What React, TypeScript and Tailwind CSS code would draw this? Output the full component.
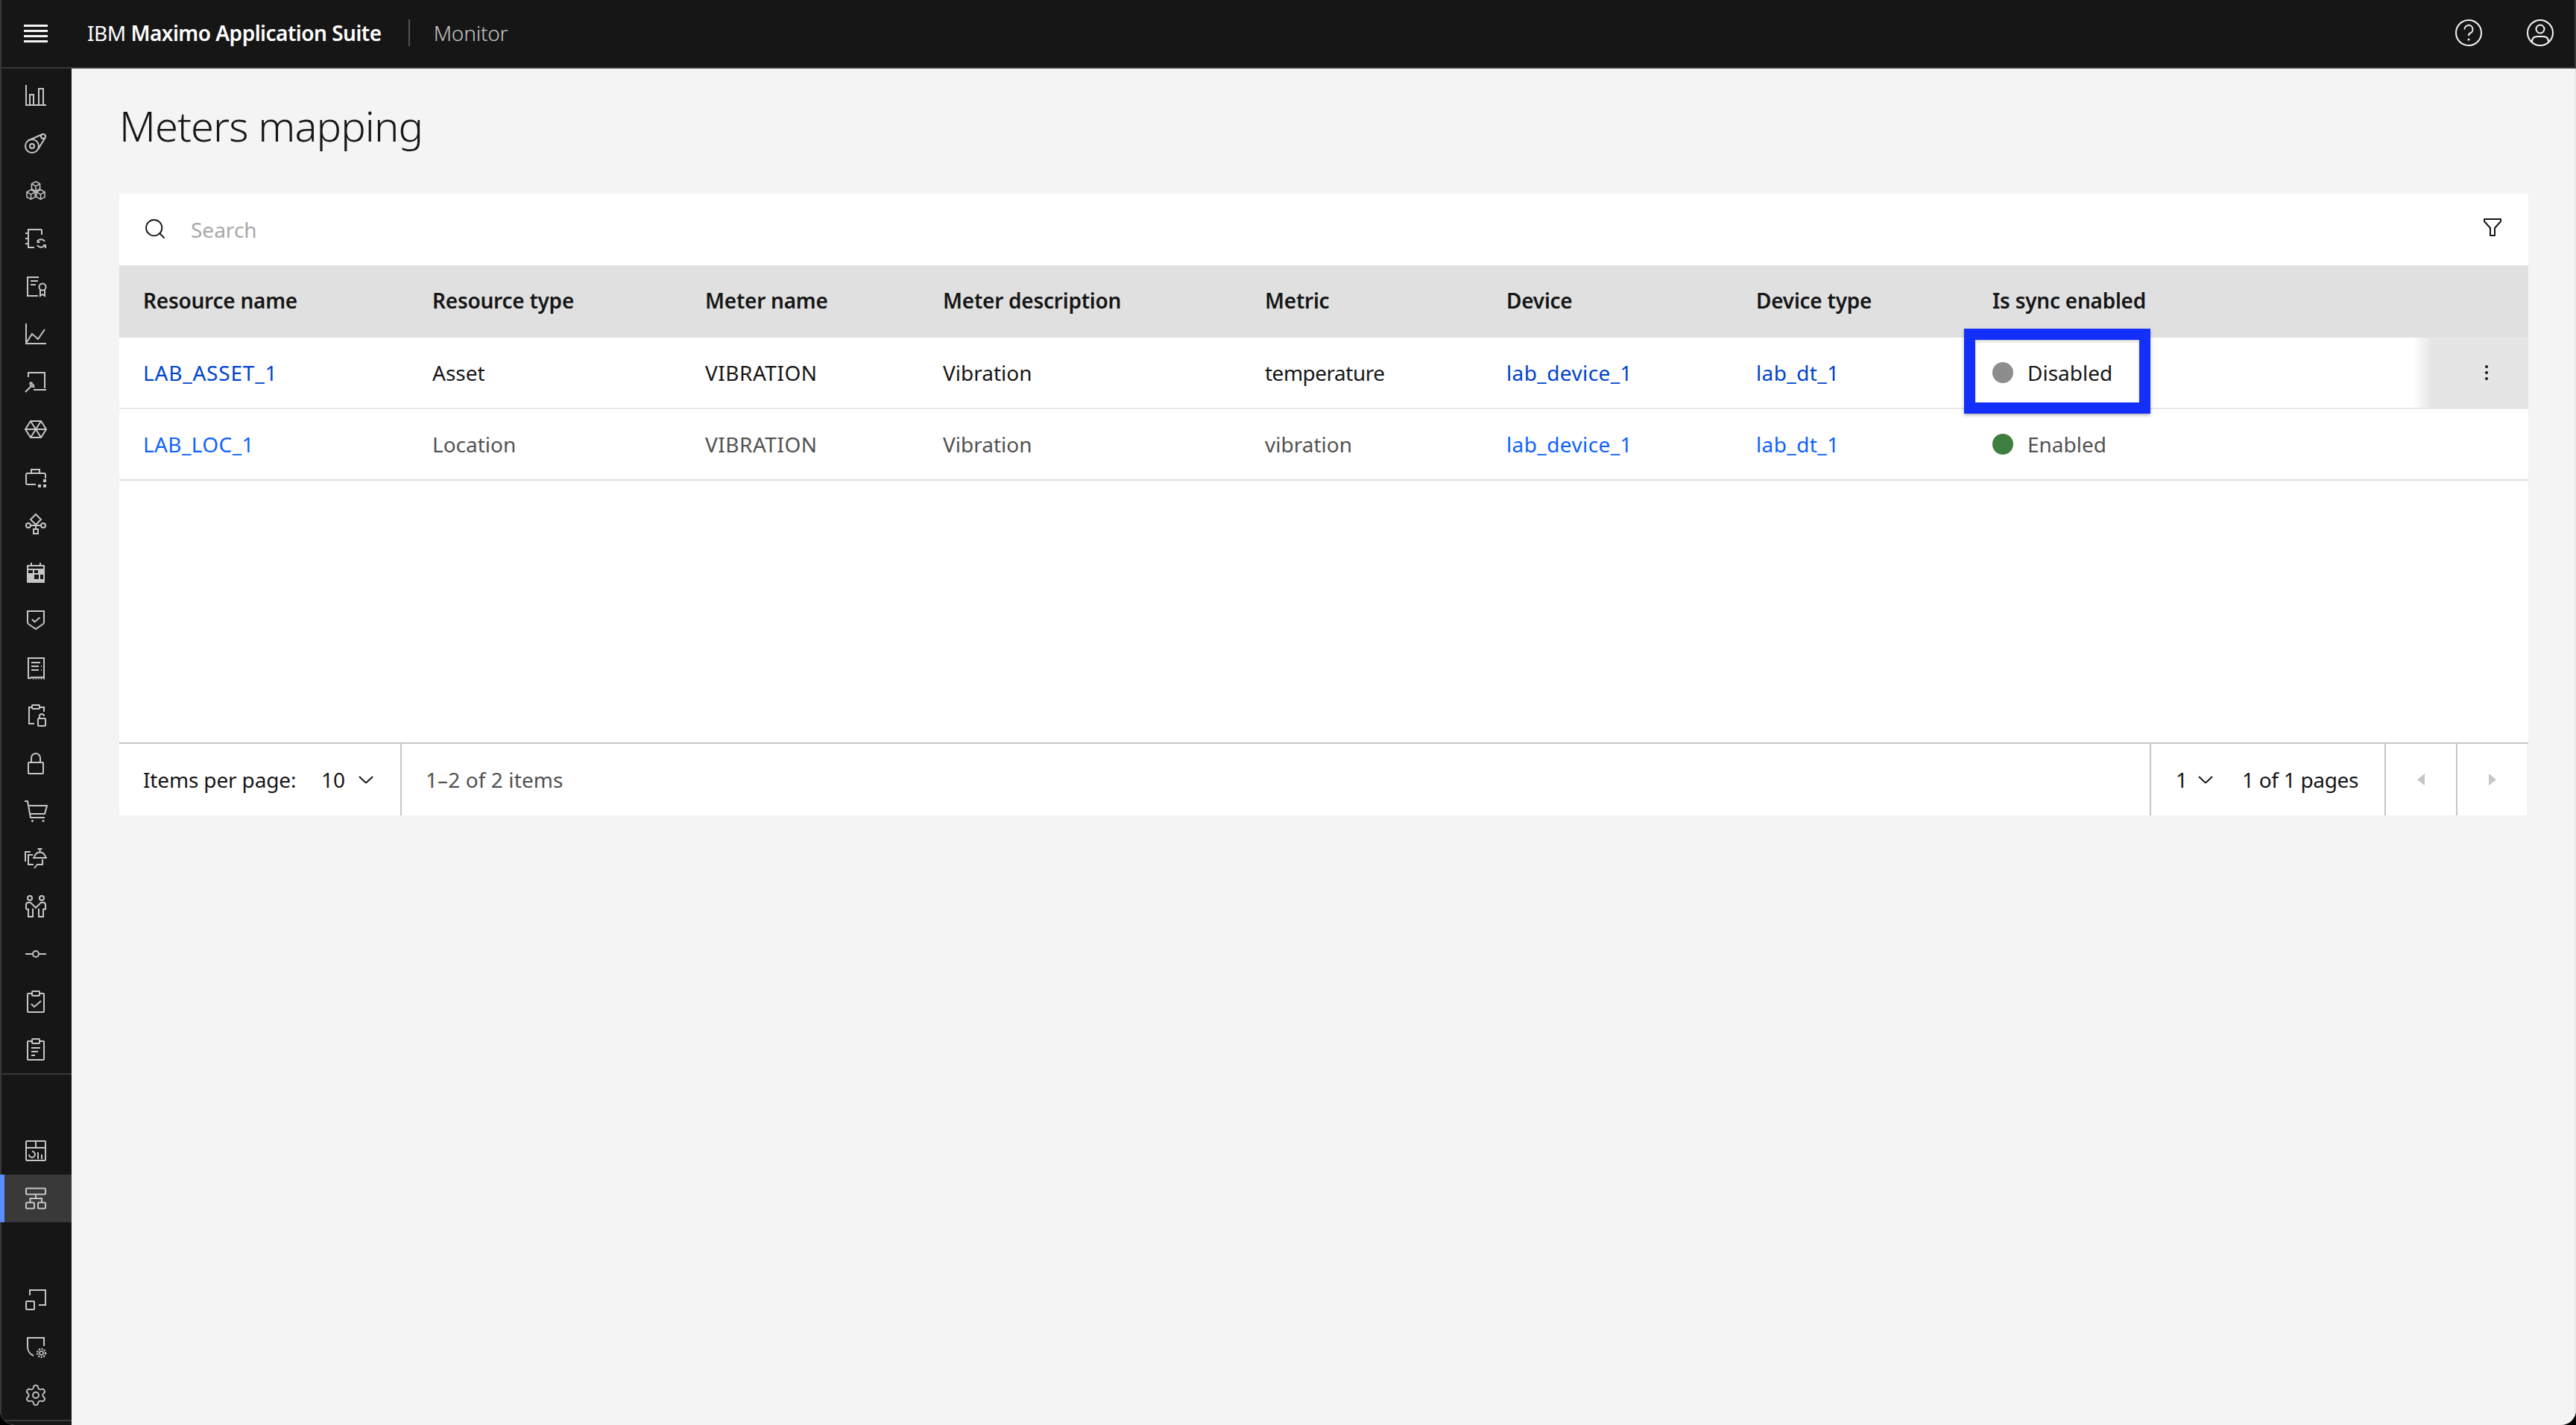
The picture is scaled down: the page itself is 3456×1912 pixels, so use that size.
import React from "react";
import { Settings, Search } from "lucide-react";

const font = "font-['Noto_Sans',sans-serif]";
const cols = "grid grid-cols-[388px_366px_319px_432px_324px_335px_317px_1fr]";

function Ico({ children }: { children: React.ReactNode }) {
  return (
    <svg viewBox="0 0 32 32" className="w-[32px] h-[32px]" fill="none" stroke="#c6c6c6" strokeWidth="2">
      {children}
    </svg>
  );
}

const Cube = ({ x, y }: { x: number; y: number }) => (
  <path d={`M${x} ${y - 6.5}l5.6 3.2v6.6l-5.6 3.2l-5.6-3.2v-6.6zM${x - 5.6} ${y - 3.3}l5.6 3.3l5.6-3.3M${x} ${y}v6.5`} strokeWidth="1.5" />
);

const topIcons: React.ReactNode[] = [
  <><path d="M3 2V29H30" /><rect x="8" y="15" width="5" height="14" /><rect x="20" y="7" width="6" height="22" /></>,
  <><circle cx="11" cy="20" r="9" /><circle cx="11" cy="20" r="3" /><circle cx="26" cy="7" r="3" /><path d="M6 12.5L24 4.5M19 24.5L28.5 9" /></>,
  <><Cube x={16} y={10} /><Cube x={9.5} y={21} /><Cube x={22.5} y={21} /></>,
  <><path d="M24 11V5a1 1 0 0 0-1-1H6v24h8M2 9h5M2 16h5M2 23h5" /><path d="M18 20a6 6 0 0 1 10 0M18.5 18v3h3M28 25a6 6 0 0 1-10 0M29 29v-4h-3" /></>,
  <><path d="M20 4H5V29H19M9 9H19M9 14H16" /><circle cx="25" cy="17" r="4.5" /><path d="M22 21v8l3-2l3 2v-8" /></>,
  <><path d="M3 2V29H30" /><path d="M4 27L11 16L19 23L28 10" /></>,
  <><path d="M6 10V4H28V25M13 27H30" /><path d="M2 30L10 22M8.5 17.5a4.5 4.5 0 0 0 5 5.5l-1-3l-1.5-.5l-.5-2z" /></>,
  <><path d="M2 16L9 5H23L30 16L23 27H9zM9 5L23 27M23 5L9 27M2 16H30" /></>,
  <><path d="M16 26H5a2 2 0 0 1-2-2V13a2 2 0 0 1 2-2H27a2 2 0 0 1 2 2V18M10 11V6H21V11" /><g fill="#c6c6c6" stroke="none"><rect x="26" y="19" width="4" height="4" /><rect x="19" y="26" width="4" height="4" /><rect x="26" y="26" width="4" height="4" /></g></>,
  <><path d="M16 2L23 9L16 16L9 9z" /><circle cx="6" cy="17" r="3" /><circle cx="26" cy="17" r="3" /><rect x="13" y="22" width="6" height="6" /><path d="M9 17H23M16 16V22" /></>,
  <><rect x="4" y="6" width="24" height="24" rx="1" fill="#c6c6c6" stroke="none" /><rect x="6" y="8" width="20" height="3" fill="#161616" stroke="none" /><g fill="#161616" stroke="none"><rect x="6" y="13" width="6" height="4" /><rect x="14" y="13" width="5" height="4" /><rect x="14" y="19" width="6" height="6" /><rect x="22" y="19" width="4" height="6" /></g><path d="M10 3V7M22 3V7" /></>,
  <><path d="M5 4H27V19a3 3 0 0 1-1.5 2.5L16 28L6.5 21.5A3 3 0 0 1 5 19z" /><path d="M11 15l3.5 3.5l7-6" /></>,
  <><path d="M6 30V3H27V30c-1.5-2-2.7-2-3.5 0c-1-2-2.5-2-3.7 0c-1-2-2.5-2-3.7 0c-1-2-2.5-2-3.6 0c-1-2-2.5-2-3.5 0z" /><path d="M10 9H22M10 14H20M23 14H24M10 19H20M23 19H24" /></>,
  <><path d="M11 5H7V27H14M21 5H27V11" /><rect x="11" y="2" width="10" height="5" rx="1" /><rect x="19" y="20" width="10" height="10" rx="1" /><path d="M21 20v-3a3 3 0 0 1 6 0" /></>,
  <><rect x="6" y="15" width="20" height="15" rx="1" /><path d="M10 15V9a6 6 0 0 1 12 0v6" /></>,
  <><path d="M1 3H5L9 25H28M7 9H31L28 20H9" /><circle cx="11.5" cy="29.5" r="1.5" fill="#c6c6c6" stroke="none" /><circle cx="26" cy="29.5" r="1.5" fill="#c6c6c6" stroke="none" /></>,
  <><path d="M9 7H2V20M12 11H6V24H13" /><path d="M12 15H31M14 15a7.5 7.500 0 0 1 15 0M21.500 7.500V4M18.500 3H24.500" /><path d="M25 17v7H18l-4 5" /></>,
  <><circle cx="8" cy="5" r="3" /><circle cx="24" cy="5" r="3" /><path d="M3 20V14a3 3 0 0 1 3-3H9L16 18L23 11H26a3 3 0 0 1 3 3V20H26V30H20V19M12 19V30H6V20H3" /></>,
  <><path d="M2 16H11M21 16H30" /><circle cx="16" cy="16" r="4" /></>,
  <><rect x="5" y="5" width="22" height="25" rx="1" /><rect x="11" y="2" width="10" height="6" rx="1" fill="#161616" /><path d="M10 19l4 4l9-8" /></>,
  <><rect x="5" y="5" width="22" height="25" rx="1" /><rect x="11" y="2" width="10" height="6" rx="1" fill="#161616" /><path d="M10 14H22M10 19H19M10 24H15" /></>,
];

const bottomIcons: React.ReactNode[] = [
  <><rect x="3" y="3" width="26" height="26" rx="1" /><path d="M3 12H29M16 3V12" /><path d="M7 21a4 4 0 1 0 4-4" /><path d="M19 18V27M24 21V27" /></>,
  <><rect x="3" y="2.5" width="26" height="8" rx="1" /><rect x="3" y="21.5" width="11" height="8" rx="1" /><rect x="19" y="21.5" width="10" height="8" rx="1" /><path d="M16 11V16M8.5 21V16H24V21" /></>,
  <><path d="M8 10V3H29V23H20" /><rect x="3" y="18" width="11" height="11" rx="1" /></>,
  <><path d="M27 14V3H5V15c0 5 3 10 8 12" /><circle cx="23.5" cy="23.5" r="2.5" strokeWidth="1.6" /><circle cx="23.5" cy="23.5" r="5.5" strokeDasharray="2 1.6" strokeWidth="2.4" /></>,
];

function NavItem({ children, active }: { children: React.ReactNode; active?: boolean }) {
  return (
    <div className={`h-[64px] flex items-center justify-center ${active ? "bg-[#393939] border-l-[6px] border-[#5b8dff]" : ""}`}>
      <div className={active ? "-ml-[6px]" : ""}>{children}</div>
    </div>
  );
}

const A = ({ children, dark, wide }: { children: string; dark?: boolean; wide?: boolean }) => (
  <span className={`${wide ? "tracking-[0.8px]" : "tracking-[0.4px]"} ${dark ? "text-[#0043ce]" : "text-[#0f62fe]"}`}>{children}</span>
);

function Cell({ children }: { children?: React.ReactNode }) {
  return <div className="pl-[32px] flex items-center whitespace-nowrap">{children}</div>;
}

const Chevron = ({ className }: { className: string }) => (
  <svg viewBox="0 0 20 10" className={`w-[20px] h-[10px] ${className}`} fill="none" stroke="#161616" strokeWidth="2">
    <path d="M1 1L10 9.5L19 1" />
  </svg>
);

export default function App() {
  return (
    <div className={`relative w-[3456px] h-[1912px] bg-black overflow-hidden ${font}`}>
      <div className="flex flex-col w-full h-full rounded-b-[20px] overflow-hidden bg-[#f4f4f4]">
        {/* header */}
        <header className="h-[92px] shrink-0 bg-[#161616] border-b-[2px] border-[#393939] border-l-[2px] border-r-[2px] flex items-center text-[28px] text-white">
          <svg viewBox="0 0 32 24" className="w-[32px] h-[24px] ml-[30px]" fill="#f4f4f4">
            <rect y="0" width="32" height="3" /><rect y="7" width="32" height="3" /><rect y="14" width="32" height="3" /><rect y="21" width="32" height="3" />
          </svg>
          <div className="ml-[53px] -mt-[3px] whitespace-nowrap tracking-[-0.5px]">
            IBM <span className="font-semibold">Maximo Application Suite</span>
          </div>
          <div className="ml-[36px] w-[2px] h-[36px] -mt-[2px] bg-[#525252]" />
          <div className="ml-[32px] -mt-[3px] text-[#c6c6c6] font-light tracking-[-0.2px]">Monitor</div>
          <div className="ml-auto flex gap-[56px] mr-[26px] -mt-[2px]">
            <svg viewBox="0 0 40 40" className="w-[40px] h-[40px]" fill="none" stroke="#f4f4f4" strokeWidth="2">
              <circle cx="20" cy="20" r="17" />
              <path d="M14.5 15.5a5.5 5.5 0 1 1 7.5 5c-1.5.6-2 1.5-2 3.5" />
              <circle cx="20" cy="29" r="1.5" fill="#f4f4f4" stroke="none" />
            </svg>
            <svg viewBox="0 0 40 40" className="w-[40px] h-[40px]" fill="none" stroke="#f4f4f4" strokeWidth="2">
              <circle cx="20" cy="20" r="17" />
              <circle cx="20" cy="15" r="5.5" />
              <path d="M9 32c0-5 3-7 7-7h8c4 0 7 2 7 7" />
            </svg>
          </div>
        </header>

        <div className="flex flex-1 min-h-0 border-r-[2px] border-[#e8e8e8]">
          {/* sidebar */}
          <aside className="w-[96px] shrink-0 bg-[#161616] border-l-[2px] border-[#393939] flex flex-col">
            <div className="pt-[4px] h-[1350px] border-b-[2px] border-[#393939] shrink-0 -ml-[2px]">
              {topIcons.map((ic, i) => (
                <NavItem key={i}><Ico>{ic}</Ico></NavItem>
              ))}
            </div>
            <div className="mt-[70px] -ml-[2px]">
              <NavItem><Ico>{bottomIcons[0]}</Ico></NavItem>
              <NavItem active><Ico>{bottomIcons[1]}</Ico></NavItem>
            </div>
            <div className="mt-[72px] -ml-[2px]">
              <NavItem><Ico>{bottomIcons[2]}</Ico></NavItem>
              <NavItem><Ico>{bottomIcons[3]}</Ico></NavItem>
              <NavItem><Settings size={32} strokeWidth={1.4} color="#c6c6c6" /></NavItem>
            </div>
            <div className="mt-auto h-[7px] border-t-[2px] border-[#393939] -ml-[2px]" />
          </aside>

          {/* main */}
          <main className="flex-1 min-w-0 pl-[64px] pr-[62px]">
            <h1 className="h-[168px] pt-[40px] text-[56px] leading-[72px] font-light tracking-[-0.9px] text-[#161616] whitespace-nowrap">Meters mapping</h1>

            {/* search */}
            <div className="h-[96px] bg-white flex items-center pl-[32px] pr-[36px] text-[28px]">
              <Search size={32} strokeWidth={1.4} color="#161616" className="-mt-[2px]" />
              <span className="ml-[32px] text-[#a8a8a8]">Search</span>
              <svg viewBox="0 0 24 24" className="ml-auto -mt-[6px] w-[24px] h-[24px]" fill="none" stroke="#161616" strokeWidth="2">
                <path d="M1 1H23V4L15 13V23H9V13L1 4z" strokeLinejoin="round" />
              </svg>
            </div>

            {/* table */}
            <div className={`${cols} h-[97px] pb-[3px] bg-[#e0e0e0] text-[28px] font-semibold tracking-[-0.25px] text-[#161616]`}>
              {["Resource name", "Resource type", "Meter name", "Meter description", "Metric", "Device", "Device type", "Is sync enabled"].map((h) => (
                <Cell key={h}>{h}</Cell>
              ))}
            </div>
            <div className={`${cols} h-[96px] bg-white border-b-[2px] border-[#e8e8e8] text-[28px] text-[#161616]`}>
              <Cell><A dark wide>LAB_ASSET_1</A></Cell>
              <Cell>Asset</Cell>
              <Cell><span className="tracking-[0.5px]">VIBRATION</span></Cell>
              <Cell>Vibration</Cell>
              <Cell><span className="tracking-[-0.5px]">temperature</span></Cell>
              <Cell><A dark>lab_device_1</A></Cell>
              <Cell><A dark>lab_dt_1</A></Cell>
              <div className="pl-[32px] flex items-center whitespace-nowrap">
                <span className="w-[28px] h-[28px] rounded-full bg-[#8d8d8d] mr-[19px]" />Disabled
                <div className="ml-auto self-stretch w-[154px] bg-[linear-gradient(to_right,transparent,#e5e5e5_24px)] flex items-center justify-end pr-[54px]">
                  <svg viewBox="0 0 4 20" className="w-[4px] h-[20px]" fill="#161616">
                    <circle cx="2" cy="2" r="2" /><circle cx="2" cy="10" r="2" /><circle cx="2" cy="18" r="2" />
                  </svg>
                </div>
              </div>
            </div>
            <div className={`${cols} h-[96px] bg-white border-b-[2px] border-[#e0e0e0] text-[28px] text-[#525252]`}>
              <Cell><A>LAB_LOC_1</A></Cell>
              <Cell>Location</Cell>
              <Cell><span className="tracking-[0.5px]">VIBRATION</span></Cell>
              <Cell>Vibration</Cell>
              <Cell>vibration</Cell>
              <Cell><A>lab_device_1</A></Cell>
              <Cell><A>lab_dt_1</A></Cell>
              <Cell>
                <span className="w-[28px] h-[28px] rounded-full bg-[#3e7e3e] mr-[19px]" />Enabled
              </Cell>
            </div>
            <div className="h-[351px] bg-white" />

            {/* pagination */}
            <div className="border-t-[2px] border-[#c6c6c6]">
              <div className="h-[96px] mr-[2px] bg-white flex text-[28px] text-[#161616]">
                <div className="w-[379px] pl-[32px] flex items-center whitespace-nowrap border-r-[2px] border-[#c6c6c6]">
                  <span className="tracking-[-0.15px]">Items per page:</span>
                  <span className="ml-auto">10</span>
                  <Chevron className="ml-[18px] mr-[36px]" />
                </div>
                <div className="pl-[32px] flex items-center text-[#525252] tracking-[0.1px] whitespace-nowrap">1–2 of 2 items</div>
                <div className="ml-auto w-[315px] pl-[33px] flex items-center whitespace-nowrap border-l-[2px] border-[#c6c6c6]">
                  1
                  <Chevron className="ml-[14px]" />
                  <span className="ml-[39px] tracking-[-0.3px]">1 of 1 pages</span>
                </div>
                <div className="w-[96px] flex items-center justify-center border-l-[2px] border-[#c6c6c6]">
                  <svg viewBox="0 0 10 16" className="w-[10px] h-[16px]" fill="#c6c6c6"><path d="M10 0V16L0 8z" /></svg>
                </div>
                <div className="w-[95px] flex items-center justify-center border-l-[2px] border-[#c6c6c6]">
                  <svg viewBox="0 0 10 16" className="w-[10px] h-[16px]" fill="#c6c6c6"><path d="M0 0V16L10 8z" /></svg>
                </div>
              </div>
            </div>
          </main>
        </div>
      </div>

      {/* annotation highlight */}
      <div className="absolute left-[2635px] top-[441px] w-[250px] h-[114px] border-[15px] border-[#1330fb] shadow-[0_2px_4px_rgba(0,0,0,0.3),inset_0_2px_3px_rgba(0,0,0,0.2)]" />
    </div>
  );
}
